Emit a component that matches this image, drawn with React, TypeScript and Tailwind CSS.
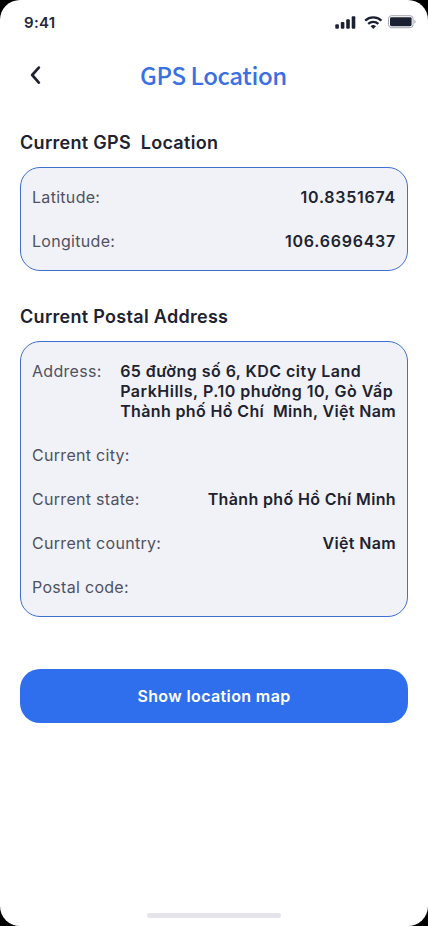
import type { ReactNode } from 'react';

type Field = {
  label: string;
  value?: ReactNode;
};

const coordinates: Field[] = [
  { label: 'Latitude:', value: <span className="tracking-[0.75px]">10.8351674</span> },
  { label: 'Longitude:', value: <span className="tracking-[0.75px]">106.6696437</span> },
];

const postalAddress: Field[] = [
  {
    label: 'Address:',
    value: (
      <>
        <span className="block tracking-[0.46px]">65 đường số 6, KDC city Land</span>
        <span className="block tracking-[0.51px]">ParkHills, P.10 phường 10, Gò Vấp</span>
        <span className="block">Thành phố Hồ Chí{'  '}Minh, Việt Nam</span>
      </>
    ),
  },
  { label: 'Current city:' },
  { label: 'Current state:', value: 'Thành phố Hồ Chí Minh' },
  { label: 'Current country:', value: 'Việt Nam' },
  { label: 'Postal code:' },
];

const StatusBar = () => (
  <div className="flex h-11 items-center justify-between pr-3 pl-6">
    <p className="pt-0.5 text-[15px] font-semibold tracking-[0.3px] text-[#232638]">9:41</p>
    <div className="flex items-center text-[#1c2033]">
      <svg width="21" height="13" viewBox="0 0 21 13" fill="currentColor">
        <rect x="0.3" y="8.3" width="3.6" height="4.4" rx="1" />
        <rect x="5.8" y="6" width="3.6" height="6.7" rx="1" />
        <rect x="11.2" y="3.2" width="3.6" height="9.5" rx="1" />
        <rect x="16.7" y="0.2" width="3.6" height="12.5" rx="1" />
      </svg>
      <svg
        className="ml-2"
        width="19"
        height="13"
        viewBox="0 0 19 13"
        fill="none"
        stroke="currentColor"
        strokeWidth="2.3"
      >
        <path d="M1.2 4.6a12 12 0 0 1 16.2 0" />
        <path d="M4.2 7.9a7.6 7.6 0 0 1 10.2 0" />
        <path d="M9.3 12.9 6.6 10.2a4 4 0 0 1 5.4 0Z" fill="currentColor" stroke="none" />
      </svg>
      <svg className="ml-[5px]" width="28" height="14" viewBox="0 0 28 14" fill="none">
        <rect x="0.5" y="0.7" width="24.6" height="12" rx="3" stroke="#a4a6ae" />
        <rect x="2" y="2.2" width="21.6" height="9" rx="1.4" fill="currentColor" />
        <path d="M26.4 4.9v3.8c.8-.3 1.2-1.1 1.2-1.9s-.4-1.6-1.2-1.9Z" fill="#a4a6ae" />
      </svg>
    </div>
  </div>
);

const Section = ({ title, children }: { title: string; children: ReactNode }) => (
  <section>
    <h2 className="text-lg leading-6 font-semibold tracking-[0.3px] whitespace-pre text-[#20222f]">
      {title}
    </h2>
    <div className="mt-3 flex flex-col gap-6 rounded-[20px] border border-[#3f6fd0] bg-[#f1f2f8] px-[11px] py-[19px]">
      {children}
    </div>
  </section>
);

const Row = ({ label, value }: Field) => (
  <div className="flex justify-between text-base leading-5">
    <span className="tracking-[0.3px] text-[#4e5162]">{label}</span>
    {value && (
      <div className="font-semibold tracking-[0.36px] whitespace-pre text-[#20222f]">{value}</div>
    )}
  </div>
);

const App = () => {
  return (
    <div className="bg-black font-['Inter',sans-serif]">
      <div className="flex h-[926px] w-[428px] flex-col rounded-[20px] bg-white">
        <StatusBar />
        <header className="grid h-16 grid-cols-[30px_1fr_30px] items-center px-5">
          <button type="button" aria-label="Back" className="flex justify-end pr-2">
            <svg
              width="12"
              height="20"
              viewBox="0 0 12 20"
              fill="none"
              stroke="#20222f"
              strokeWidth="2.7"
              strokeLinecap="round"
              strokeLinejoin="round"
            >
              <path d="M8.8 1.6 2.2 9l6.6 7.6" />
            </svg>
          </button>
          <h1 className="pr-px pb-0.5 text-center font-['Noto_Sans_CJK_JP',sans-serif] text-2xl leading-8 font-medium tracking-[-0.4px] text-[#3a70e2]">
            GPS Location
          </h1>
        </header>
        <main className="flex grow flex-col px-5 pt-[23px]">
          <div className="flex flex-col gap-[34px]">
            <Section title="Current GPS  Location">
              {coordinates.map((field) => (
                <Row key={field.label} {...field} />
              ))}
            </Section>
            <Section title="Current Postal Address">
              {postalAddress.map((field) => (
                <Row key={field.label} {...field} />
              ))}
            </Section>
          </div>
          <button
            type="button"
            className="mt-[52px] h-[54px] rounded-[20px] bg-[#2f6fed] text-base font-semibold tracking-[0.38px] text-white"
          >
            Show location map
          </button>
        </main>
        <div className="mx-auto mb-2 h-[5px] w-[134px] rounded-full bg-[#e4e4ea]" />
      </div>
    </div>
  );
};

export default App;
